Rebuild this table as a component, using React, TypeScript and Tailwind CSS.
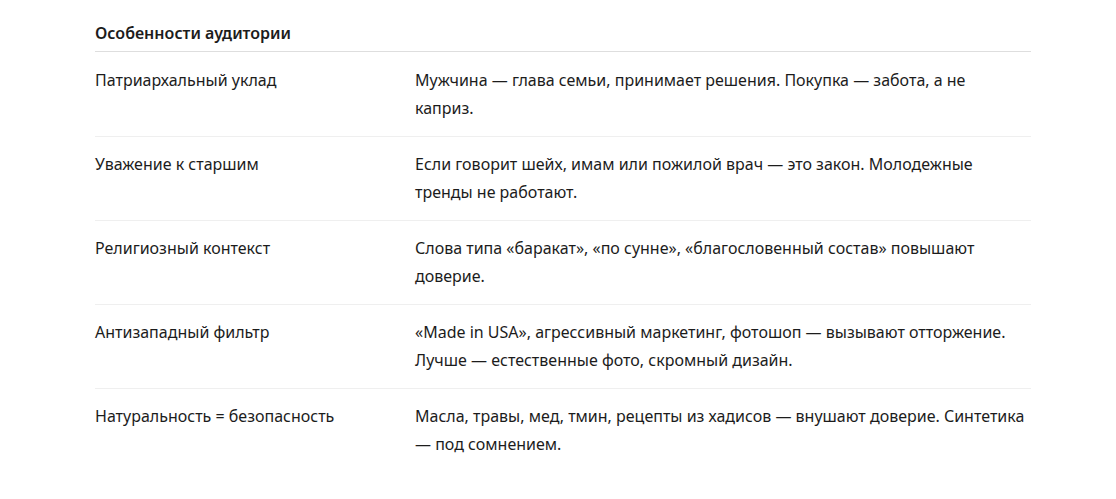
import React from "react";

const rows: [string, string[]][] = [
  ["Патриархальный уклад", ["Мужчина — глава семьи, принимает решения. Покупка — забота, а не", "каприз."]],
  ["Уважение к старшим", ["Если говорит шейх, имам или пожилой врач — это закон. Молодежные", "тренды не работают."]],
  ["Религиозный контекст", ["Слова типа «баракат», «по сунне», «благословенный состав» повышают", "доверие."]],
  ["Антизападный фильтр", ["«Made in USA», агрессивный маркетинг, фотошоп — вызывают отторжение.", "Лучше — естественные фото, скромный дизайн."]],
  ["Натуральность = безопасность", ["Масла, травы, мед, тмин, рецепты из хадисов — внушают доверие. Синтетика", "— под сомнением."]],
];

export default function App() {
  return (
    <div className="min-h-[499px] bg-white font-['Noto_Sans',sans-serif] text-[#1c1c1c]">
      <div className="ml-[95px] w-[936px] pt-[20px]">
        <div className="border-b border-[#dedede] pb-[5px] text-[16px] font-semibold leading-[26px]">
          Особенности аудитории
        </div>
        {rows.map(([a, b], i) => (
          <div
            key={i}
            className={`grid grid-cols-[320px_1fr] pb-[14px] text-[16px] leading-[28px] ${i === 0 ? "pt-[14px]" : "pt-[13px]"} ${i < rows.length - 1 ? "border-b border-[#efefef]" : ""}`}
          >
            <div>{a}</div>
            <div className="whitespace-nowrap">
              {b.map((line, j) => (
                <div key={j}>{line}</div>
              ))}
            </div>
          </div>
        ))}
      </div>
    </div>
  );
}
